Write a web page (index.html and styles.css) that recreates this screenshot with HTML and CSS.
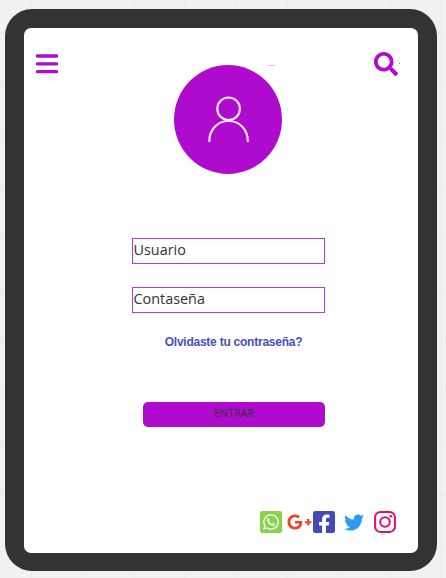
FILE: index.html
```html
<!DOCTYPE html>
<html lang="es">
<head>
<meta charset="utf-8">
<title>Entrar</title>
<link rel="stylesheet" href="styles.css">
</head>
<body>
<div class="device">
  <main class="screen">
    <header class="top">
      <svg class="menu" viewBox="0 0 22 20"><path d="M1.3 2H20.7M1.3 9.8H20.7M1.3 17.6H20.7"/></svg>
      <svg class="avatar" viewBox="0 0 108 109"><ellipse class="disc" cx="54" cy="54.5" rx="54" ry="54.5"/><circle cx="54.6" cy="43.8" r="11.3"/><path d="M35.3 76.2C35.3 64.5 43.5 56 54.6 56S73.8 64.5 73.8 76.2"/></svg>
      <svg class="search" viewBox="0 0 512 512"><path d="M505 442.7L405.3 343c-4.500-4.500-10.600-7-17-7H372c27.600-35.300 44-79.700 44-128C416 93.100 322.900 0 208 0S0 93.100 0 208s93.100 208 208 208c48.300 0 92.700-16.400 128-44v16.300c0 6.400 2.500 12.500 7 17l99.700 99.700c9.400 9.400 24.600 9.400 33.900 0l28.300-28.300c9.400-9.400 9.400-24.600.1-34zM208 336c-70.700 0-128-57.200-128-128 0-70.700 57.200-128 128-128 70.700 0 128 57.200 128 128 0 70.700-57.200 128-128 128z"/></svg>
      <i class="dash"></i>
      <i class="dot"></i>
    </header>
    <form class="login">
      <label class="field">Usuario</label>
      <label class="field">Contaseña</label>
      <a class="forgot">Olvidaste tu contraseña?</a>
      <div class="enter">ENTRAR</div>
    </form>
    <footer class="social">
      <svg class="whatsapp" viewBox="0 0 448 448"><path fill-rule="evenodd" d="M48 0H400a48 48 0 0 1 48 48V400a48 48 0 0 1-48 48H48a48 48 0 0 1-48-48V48A48 48 0 0 1 48 0zM224.100 90.800c-72.700 0-131.800 59.100-131.900 131.800 0 24.900 7 49.200 20.200 70.100l3.100 5-13.300 48.600 49.900-13.100 4.800 2.900c20.200 12 43.400 18.400 67.100 18.400h.1c72.600 0 133.300-59.100 133.300-131.800 0-35.200-15.200-68.300-40.100-93.200-25-25-58-38.700-93.200-38.700zM301.600 279.200c-3.300 9.300-19.100 17.700-26.700 18.800-12.600 1.900-22.400.9-47.500-9.900-39.700-17.200-65.700-57.200-67.700-59.800-2-2.600-16.200-21.500-16.200-41s10.200-29.100 13.900-33.100c3.600-4 7.900-5 10.600-5 2.600 0 5.300 0 7.600.1 2.400.1 5.700-.9 8.900 6.800 3.300 7.900 11.200 27.400 12.200 29.400s1.700 4.300.3 6.900c-7.600 15.200-15.700 14.600-11.600 21.600 15.300 26.300 30.600 35.400 53.900 47.100 4 2 6.300 1.700 8.600-1 2.300-2.600 9.900-11.600 12.500-15.500 2.600-4 5.300-3.300 8.900-2 3.600 1.300 23.100 10.900 27.100 12.900s6.600 3 7.600 4.600c.9 1.900.9 9.900-2.400 19.100zM223.900 381.100c-26.600 0-52.700-6.700-75.800-19.300L64 384l22.500-82.200c-13.900-24-21.200-51.300-21.200-79.300C65.400 135.100 136.500 64 223.900 64c42.400 0 82.200 16.500 112.200 46.500 29.900 30 47.900 69.800 47.900 112.200 0 87.400-72.700 158.400-160.100 158.400z"/></svg>
      <svg class="google" viewBox="0 0 640 396"><path d="M386.061 170.496c1.834 9.692 3.143 19.384 3.143 31.956C389.204 312.170 315.599 390 204.800 390c-106.084 0-192-85.915-192-192S98.716 6 204.800 6c51.864 0 95.083 18.859 128.611 50.292l-52.126 50.030c-14.145-13.621-39.028-29.599-76.485-29.599-65.483 0-118.920 54.221-118.920 121.277 0 67.056 53.437 121.277 118.920 121.277 75.961 0 104.513-54.745 108.965-82.773H204.800v-66.009h181.261zm185.406 6.437V121.200h-56.001v55.733h-55.733v56.001h55.733v55.733h56.001v-55.733H627.200v-56.001h-55.733z"/></svg>
      <svg class="facebook" viewBox="0 0 448 448"><path d="M400 0H48A48 48 0 0 0 0 48v352a48 48 0 0 0 48 48h137.250V295.690h-63V224h63v-54.640c0-62.150 37-96.480 93.670-96.480 27.140 0 55.520 4.840 55.520 4.840v61h-31.270c-30.810 0-40.420 19.120-40.420 38.730V224h68.780l-11 71.690h-57.780V448H400a48 48 0 0 0 48-48V48a48 48 0 0 0-48-48z"/></svg>
      <svg class="twitter" viewBox="0 48 512 416"><path d="M459.370 151.716c.325 4.548.325 9.097.325 13.645 0 138.720-105.583 298.558-298.558 298.558-59.452 0-114.680-17.219-161.137-47.106 8.447.974 16.568 1.299 25.340 1.299 49.055 0 94.213-16.568 130.274-44.832-46.132-.975-84.792-31.188-98.112-72.772 6.498.974 12.995 1.624 19.818 1.624 9.421 0 18.843-1.300 27.614-3.573-48.081-9.747-84.143-51.980-84.143-102.985v-1.299c13.969 7.797 30.214 12.670 47.431 13.319-28.264-18.843-46.781-51.005-46.781-87.391 0-19.492 5.197-37.360 14.294-52.954 51.655 63.675 129.300 105.258 216.365 109.807-1.624-7.797-2.599-15.918-2.599-24.040 0-57.828 46.782-104.934 104.934-104.934 30.213 0 57.502 12.670 76.670 33.137 23.715-4.548 46.456-13.320 66.599-25.340-7.798 24.366-24.366 44.833-46.132 57.827 21.117-2.273 41.584-8.122 60.426-16.243-14.292 20.791-32.161 39.308-52.628 54.253z"/></svg>
      <svg class="instagram" viewBox="0 0 22 22"><rect x="1.100" y="1.100" width="19.800" height="19.800" rx="5.200"/><circle cx="11" cy="11" r="4.800"/><circle class="lens" cx="16.900" cy="5.200" r="1.300"/></svg>
      <i class="speck"></i>
    </footer>
  </main>
</div>
</body>
</html>
```
FILE: styles.css
```css
* { box-sizing: border-box; }

body {
  margin: 0;
  height: 578px;
  padding: 9px 9px 7px 5px;
  overflow: hidden;
  background-color: #f1f1f1;
  background-image:
    linear-gradient(90deg, #eaeaea 1px, transparent 1px),
    linear-gradient(#eaeaea 1px, transparent 1px);
  background-size: 51.25px 51.25px;
  background-position: 31px 33px;
  font-family: "Open Sans", sans-serif;
  color: #333;
}

svg { display: block; flex: none; }

.device {
  width: 432px;
  height: 562px;
  padding: 19px 19px 18px;
  border-radius: 27px;
  background: #333;
}

.screen {
  display: flex;
  flex-direction: column;
  height: 525px;
  border-radius: 7px;
  background: #fff;
}

.top {
  position: relative;
  display: flex;
  align-items: flex-start;
  height: 210px;
  padding: 24px 20px 0 12px;
}

.menu {
  width: 22px;
  height: 20px;
  margin-top: 2px;
  fill: none;
  stroke: #ae0bce;
  stroke-width: 3.3;
  stroke-linecap: round;
}

.avatar {
  width: 108px;
  height: 109px;
  margin: 13px 0 0 116px;
  fill: none;
  stroke: #f8e5fb;
  stroke-width: 2.2;
  stroke-linecap: round;
}

.avatar .disc { fill: #ae0bce; stroke: none; }

.search {
  width: 24px;
  height: 24px;
  margin-left: auto;
  fill: #ae0bce;
}

.dash, .dot, .speck { position: absolute; }
.dash { left: 243px; top: 37px; width: 8px; height: 1px; background: #ecbdf3; }
.dot { left: 375px; top: 35px; width: 1px; height: 1px; background: #777; }

.login {
  display: flex;
  flex-direction: column;
  width: 193px;
  margin-left: 108px;
}

.field {
  height: 26px;
  margin-bottom: 23px;
  padding-left: 0.5px;
  border: 1px solid #bd36d8;
  font-size: 14.4px;
  line-height: 21px;
}

.forgot {
  align-self: center;
  margin: -3px 0 0 10px;
  font: bold 12px/18px "Liberation Sans", Arial, sans-serif;
  letter-spacing: -0.24px;
  color: #4650b8;
  white-space: nowrap;
}

.enter {
  width: 182px;
  height: 25px;
  margin: 51px 0 0 11px;
  border-radius: 5px;
  background: #ae0bce;
  font-size: 10.7px;
  line-height: 23px;
  text-align: center;
}

.social {
  position: relative;
  display: flex;
  align-items: center;
  height: 22px;
  margin: auto 0 20px 236px;
}

.whatsapp { width: 22px; height: 22px; fill: #8bd14b; }
.google { width: 25px; height: 16px; margin-left: 5px; fill: #ef4328; }
.facebook { width: 22px; height: 22px; margin-left: 1px; fill: #414bb2; }
.twitter { width: 20px; height: 17px; margin-left: 9px; fill: #2d9bf0; }

.instagram {
  width: 22px;
  height: 22px;
  margin-left: 10px;
  fill: none;
  stroke: #df0b6d;
  stroke-width: 2;
}

.instagram .lens { fill: #df0b6d; stroke: none; }
.speck { left: 121px; top: 23px; width: 4px; height: 1px; background: #edc5f5; }
```
